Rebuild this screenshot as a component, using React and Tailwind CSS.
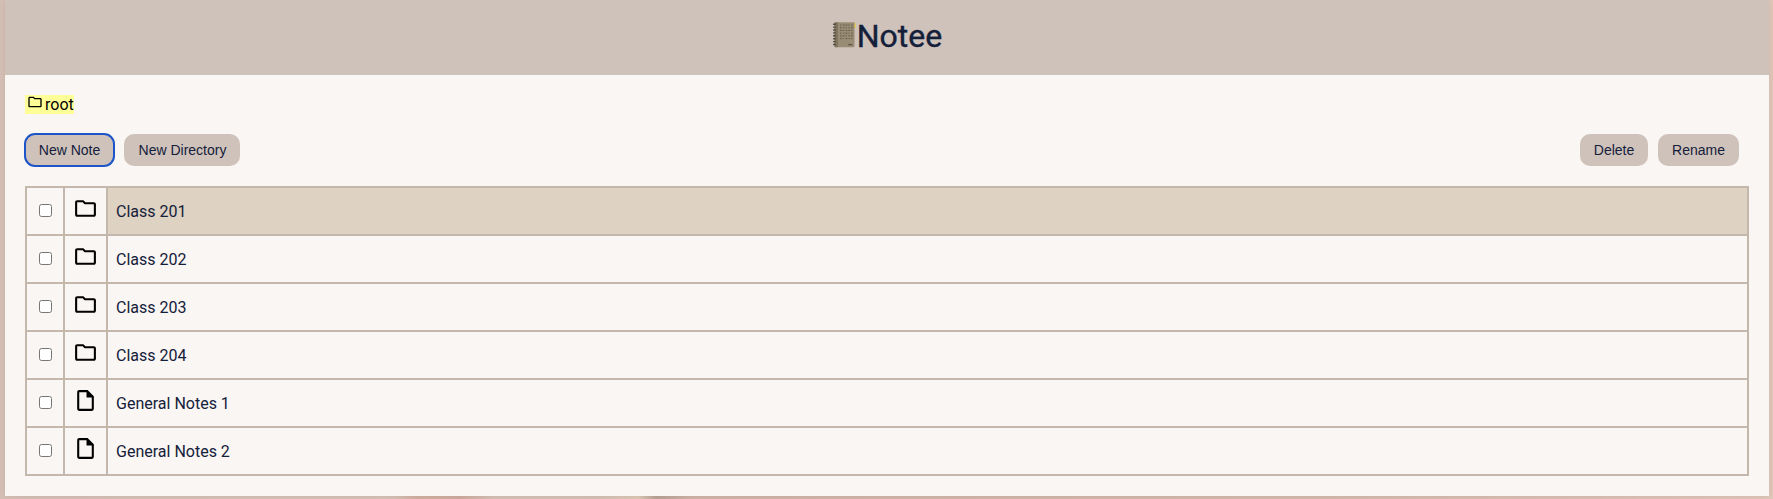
import React from "react";
import { MdOutlineFolder, MdOutlineInsertDriveFile } from "react-icons/md";

const rows = [
  { name: "Class 201", dir: true, active: true },
  { name: "Class 202", dir: true },
  { name: "Class 203", dir: true },
  { name: "Class 204", dir: true },
  { name: "General Notes 1" },
  { name: "General Notes 2" },
];

function Notebook() {
  const dots = [];
  for (let r = 0; r < 6; r++)
    for (let c = 0; c < 5; c++)
      dots.push(
        <rect key={r + "-" + c} x={7 + c * 2.8} y={2.5 + r * 2.7} width={(r + c) % 3 ? 1.7 : 1.2} height="1.1" fill="#605743" opacity={(r * c) % 2 ? 0.6 : 0.85} />
      );
  return (
    <svg className="h-[26px] w-6 shrink-0" viewBox="0 0 24 26">
      <rect x="20.5" y="1" width="2.5" height="5" rx="1" fill="#e2cb5c" />
      <rect x="1.5" y="0.3" width="20" height="25" rx="1" fill="#998c75" />
      <rect x="1.5" y="0.3" width="3.5" height="25" rx="1" fill="#80745f" />
      {[1.5, 4.4, 7.3, 10.2, 13.1, 16, 18.9, 21.8].map((y) => (
        <rect key={y} x="0" y={y} width="3" height="1.4" rx="0.6" fill="#514b40" />
      ))}
      {dots}
      <rect x="15.2" y="22" width="4" height="1.2" fill="#5c5340" />
    </svg>
  );
}

function Button({ children, className }) {
  return (
    <button className={"flex h-8 items-center justify-center rounded-[10px] bg-[#cfc2ba] font-['Liberation_Sans',sans-serif] text-[14px] text-[#14203a] " + className}>
      {children}
    </button>
  );
}

export default function App() {
  return (
    <div className="h-[499px] overflow-hidden bg-[linear-gradient(90deg,#d6c1b7_0%,#d8c4b9_22%,#d2b2a3_23.5%,#cfaea0_26%,#d7c3b8_28%,#d6c2b6_34%,#dfcbb7_36%,#b9a496_37%,#d0b5a8_39%,#d5bbae_75%,#e0c8ba_100%)] pr-1 pl-[5px] font-['Roboto',sans-serif]">
      <main className="h-[496px] bg-[#faf6f3] shadow-[0_0_8px_rgba(80,50,40,0.12)]">
        <header className="flex h-[75px] items-center justify-center bg-[#cfc2ba] pb-1 pl-px">
          <div className="pb-[2px]"><Notebook /></div>
          <h1 className="text-[32px] leading-[38px] font-normal text-[#14203a] [-webkit-text-stroke:0.4px_#14203a]">Notee</h1>
        </header>
        <div className="px-5 pt-5">
          <nav className="flex h-[19px] w-[49px] items-start bg-[#ffff98] pl-[2px] text-[16px] leading-[19px] text-black">
            <MdOutlineFolder className="-mt-px mr-[2px] size-4 shrink-0" />
            <span>root</span>
          </nav>
          <div className="mt-5 flex justify-between pr-[10px]">
            <div className="flex gap-[10px]">
              <Button className="w-[89px] outline-2 -outline-offset-1 outline-[#1d55c9]">New Note</Button>
              <Button className="w-[116px] pl-px">New Directory</Button>
            </div>
            <div className="flex gap-[10px]">
              <Button className="w-[68px]">Delete</Button>
              <Button className="w-[81px]">Rename</Button>
            </div>
          </div>
          <div className="mt-5 border-t-2 border-l-2 border-[#c4b8ac]">
            {rows.map((row) => (
              <div key={row.name} className="flex h-12 text-[#14203a]">
                <div className="flex w-[38px] items-center justify-center border-r-2 border-b-2 border-[#c4b8ac] pb-px">
                  <input type="checkbox" className="size-[13px]" />
                </div>
                <div className="flex w-[43px] items-start justify-center border-r-2 border-b-2 border-[#c4b8ac] pt-2 text-black">
                  {row.dir ? <MdOutlineFolder className="size-[25px]" /> : <MdOutlineInsertDriveFile className="size-[25px]" />}
                </div>
                <div className={"flex flex-1 items-center border-r-2 border-b-2 border-[#c4b8ac] pt-px pl-2 text-[16px] " + (row.active ? "bg-[#ded2c2]" : "")}>
                  {row.name}
                </div>
              </div>
            ))}
          </div>
        </div>
      </main>
    </div>
  );
}
